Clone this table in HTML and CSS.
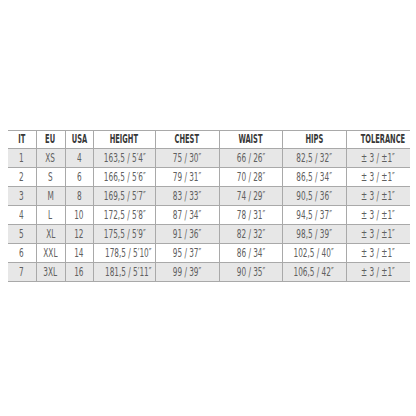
FILE: index.html
```
<!DOCTYPE html>
<html>
<head>
<meta charset="utf-8">
<link rel="stylesheet" href="styles.css">
</head>
<body>
<div class="page">
<table class="sizes">
<colgroup>
<col class="c-it"><col class="c-eu"><col class="c-usa"><col class="c-height"><col class="c-chest"><col class="c-waist"><col class="c-hips"><col class="c-tol">
</colgroup>
<thead>
<tr><th><span class="t">IT</span></th><th><span class="t">EU</span></th><th><span class="t">USA</span></th><th><span class="t">HEIGHT</span></th><th><span class="t">CHEST</span></th><th><span class="t">WAIST</span></th><th><span class="t">HIPS</span></th><th><span class="t">TOLERANCE</span></th></tr>
</thead>
<tbody>
<tr class="shade"><td><span class="t">1</span></td><td><span class="t">XS</span></td><td><span class="t">4</span></td><td><span class="t">163,5 / 5′4″</span></td><td><span class="t">75 / 30″</span></td><td><span class="t">66 / 26″</span></td><td><span class="t">82,5 / 32″</span></td><td><span class="t">± 3 / ±1″</span></td></tr>
<tr><td><span class="t">2</span></td><td><span class="t">S</span></td><td><span class="t">6</span></td><td><span class="t">166,5 / 5′6″</span></td><td><span class="t">79 / 31″</span></td><td><span class="t">70 / 28″</span></td><td><span class="t">86,5 / 34″</span></td><td><span class="t">± 3 / ±1″</span></td></tr>
<tr class="shade"><td><span class="t">3</span></td><td><span class="t">M</span></td><td><span class="t">8</span></td><td><span class="t">169,5 / 5′7″</span></td><td><span class="t">83 / 33″</span></td><td><span class="t">74 / 29″</span></td><td><span class="t">90,5 / 36″</span></td><td><span class="t">± 3 / ±1″</span></td></tr>
<tr><td><span class="t">4</span></td><td><span class="t">L</span></td><td><span class="t">10</span></td><td><span class="t">172,5 / 5′8″</span></td><td><span class="t">87 / 34″</span></td><td><span class="t">78 / 31″</span></td><td><span class="t">94,5 / 37″</span></td><td><span class="t">± 3 / ±1″</span></td></tr>
<tr class="shade"><td><span class="t">5</span></td><td><span class="t">XL</span></td><td><span class="t">12</span></td><td><span class="t">175,5 / 5′9″</span></td><td><span class="t">91 / 36″</span></td><td><span class="t">82 / 32″</span></td><td><span class="t">98,5 / 39″</span></td><td><span class="t">± 3 / ±1″</span></td></tr>
<tr><td><span class="t">6</span></td><td><span class="t">XXL</span></td><td><span class="t">14</span></td><td><span class="t">178,5 / 5′10″</span></td><td><span class="t">95 / 37″</span></td><td><span class="t">86 / 34″</span></td><td><span class="t">102,5 / 40″</span></td><td><span class="t">± 3 / ±1″</span></td></tr>
<tr class="shade"><td><span class="t">7</span></td><td><span class="t">3XL</span></td><td><span class="t">16</span></td><td><span class="t">181,5 / 5′11″</span></td><td><span class="t">99 / 39″</span></td><td><span class="t">90 / 35″</span></td><td><span class="t">106,5 / 42″</span></td><td><span class="t">± 3 / ±1″</span></td></tr>
</tbody>
</table>
</div>
</body>
</html>
```
FILE: styles.css
```
html, body {
  margin: 0;
  padding: 0;
  background: #ffffff;
}
.page {
  padding: 130px 6px 0 8px;
}
.sizes {
  width: 402px;
  border-collapse: collapse;
  table-layout: fixed;
  font-family: "DejaVu Sans Condensed", "Liberation Sans Narrow", "Liberation Sans", sans-serif;
  font-size: 12px;
  line-height: 13px;
  color: #606060;
}
.c-it { width: 28px; }
.c-eu { width: 29px; }
.c-usa { width: 28px; }
.c-height { width: 62px; }
.c-chest { width: 64px; }
.c-waist { width: 63px; }
.c-hips { width: 64px; }
.c-tol { width: 64px; }
.sizes th, .sizes td {
  padding: 0;
  text-align: center;
  border-top: 1px solid #a9a9a9;
  border-bottom: 1px solid #a9a9a9;
  border-left: 1px solid #a9a9a9;
  white-space: nowrap;
}
.sizes th:first-child, .sizes td:first-child {
  border-left: none;
}
.sizes th {
  height: 17px;
  font-weight: bold;
  color: #383838;
}
.sizes td {
  height: 18px;
}
.t {
  display: inline-block;
  transform: scaleX(0.68);
  transform-origin: center;
}
.sizes th .t {
  transform: scaleX(0.62);
}
.shade td {
  background: #e7e7e7;
}
```
